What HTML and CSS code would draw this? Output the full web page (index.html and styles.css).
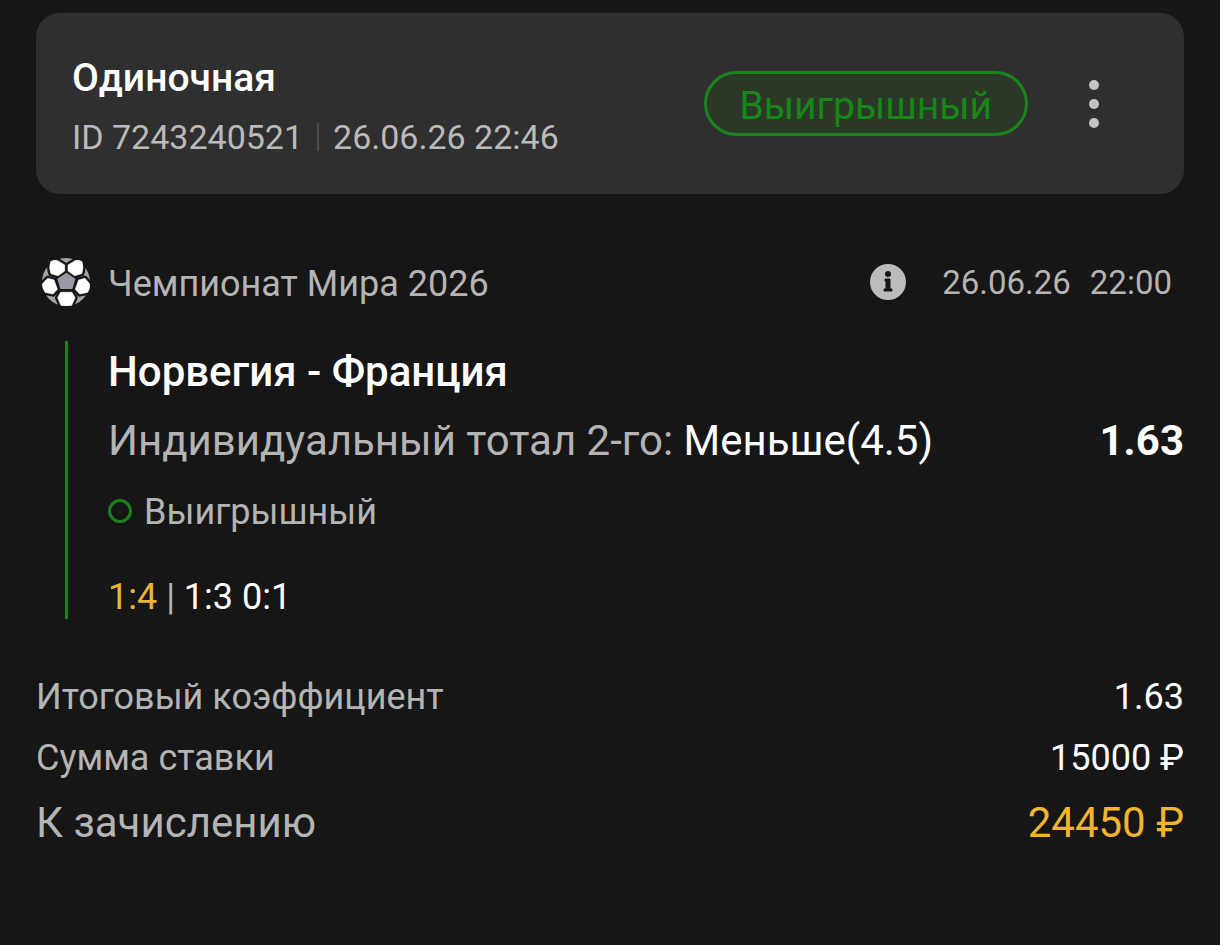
FILE: index.html
```html
<!DOCTYPE html>
<html lang="ru">
<head>
<meta charset="UTF-8">
<meta name="viewport" content="width=device-width, initial-scale=1.0">
<title>Одиночная ставка</title>
<link rel="stylesheet" href="styles.css">
</head>
<body>

<main class="coupon">
  <header class="card">
    <div class="card-info">
      <h1>Одиночная</h1>
      <p class="meta"><span>ID 7243240521</span><span class="divider"></span><time>26.06.26 22:46</time></p>
    </div>
    <span class="badge">Выигрышный</span>
    <button class="menu" type="button" aria-label="Меню">
      <svg width="10" height="48" viewBox="0 0 10 48" fill="#c4c4c4"><circle cx="5" cy="5" r="5"/><circle cx="5" cy="24" r="5"/><circle cx="5" cy="43" r="5"/></svg>
    </button>
  </header>

  <section class="event">
    <div class="league">
      <svg class="ball" viewBox="6 4 144 144">
        <defs>
          <g id="patches">
            <path d="M32 15Q42 9 53 12L74 25V43L54 57L33 51Q26 33 32 15Z"/>
            <path d="M126 15Q116 9 105 12L84 25V43L104 57L125 51Q132 33 126 15Z"/>
            <path d="M23 65L42 70L52 98L39 112L15 107Q7 94 7 82Z"/>
            <path d="M135 65L116 70L106 98L119 112L143 107Q151 94 149 82Z"/>
            <path d="M62 107H96L105 123L95 146Q79 150 63 146L53 123Z"/>
          </g>
        </defs>
        <circle cx="78" cy="76" r="72" fill="#a2a2a4"/>
        <path d="M74 40H84L115 66L104 104H54L43 66Z" fill="#161616"/>
        <use href="#patches" fill="#161616" stroke="#161616" stroke-width="16" stroke-linejoin="round"/>
        <use href="#patches" fill="#fff" stroke="#fff" stroke-width="2" stroke-linejoin="round"/>
        <path d="M79 48L106 66L97 97H61L52 66Z" fill="#9b99a5"/>
      </svg>
      <span class="league-name">Чемпионат Мира 2026</span>
      <button class="info" type="button" aria-label="Информация">
        <svg width="36" height="36" viewBox="0 0 36 36">
          <circle cx="18" cy="18" r="18" fill="#bcbcbc"/>
          <circle cx="18" cy="10" r="3" fill="#161616"/>
          <path d="M15 15H20V25H22V27H14V25H16V17H15Z" fill="#161616" stroke="#161616" stroke-linejoin="round"/>
        </svg>
      </button>
      <time class="start"><span>26.06.26</span><span>22:00</span></time>
    </div>

    <div class="bet">
      <h2>Норвегия - Франция</h2>
      <div class="market">
        <span>Индивидуальный тотал 2-го: <span class="pick">Меньше(4.5)</span></span>
        <strong class="odds">1.63</strong>
      </div>
      <p class="status"><span class="ring"></span>Выигрышный</p>
      <p class="score"><span class="total">1:4</span> <span class="bar">|</span> 1:3 0:1</p>
    </div>
  </section>

  <dl class="summary">
    <div class="row"><dt>Итоговый коэффициент</dt><dd>1.63</dd></div>
    <div class="row"><dt>Сумма ставки</dt><dd>15000 ₽</dd></div>
    <div class="row payout"><dt>К зачислению</dt><dd>24450 ₽</dd></div>
  </dl>
</main>

</body>
</html>
```
FILE: styles.css
```css
* { box-sizing: border-box; }
body { margin: 0; background: #161616; color: #b4b4b4; font-family: Roboto, sans-serif; font-size: 36px; }
h1, h2, p, dl, dd { margin: 0; }
button { padding: 0; border: none; background: none; cursor: pointer; }
svg { display: block; }
.coupon { padding: 13px 36px 36px; }

.card { display: flex; align-items: center; padding: 0 36px; background: #2f2f2f; border-radius: 24px; }
.card-info { flex: 1; padding: 35px 0 28px; }
h1 { color: #fff; font-size: 39px; font-weight: 500; line-height: 60px; }
.meta { display: flex; align-items: center; color: #bababa; font-size: 34px; line-height: 58px; }
.divider { width: 2px; height: 28px; margin: 0 14px; background: #4c4c4c; }
.badge { padding: 6px 33px 0; border: 3px solid #1a831a; border-radius: 33px; background: #2b3828; color: #168616; font-size: 39px; line-height: 53px; }
.menu { display: flex; justify-content: center; width: 60px; margin: 0 24px 0 36px; }

.league { display: flex; align-items: center; margin-top: 60px; padding: 0 12px 0 6px; line-height: 56px; }
.ball { width: 48px; height: 48px; }
.league-name { flex: 1; margin-left: 18px; padding-top: 4px; line-height: 52px; }
.info { margin-right: 36px; }
.start { display: flex; gap: 19px; padding-top: 2px; font-size: 33px; line-height: 54px; }

.bet { margin: 31px 0 0 29px; padding-left: 40px; border-left: 3px solid #1d801d; }
h2 { color: #fff; font-size: 42px; font-weight: 500; line-height: 62px; }
.market { display: flex; justify-content: space-between; margin-top: 8px; font-size: 42px; line-height: 60px; }
.pick { color: #fff; }
.odds { color: #fff; font-weight: 700; }
.status { display: flex; align-items: center; gap: 12px; margin-top: 19px; line-height: 44px; }
.ring { width: 24px; height: 24px; margin-bottom: 3px; border: 3px solid #1d801d; border-radius: 50%; }
.score { margin-top: 41px; color: #fff; line-height: 44px; }
.total { color: #ecb43c; }
.bar { color: #b4b4b4; }

.summary { margin-top: 48px; }
.row { display: flex; justify-content: space-between; line-height: 61px; }
.row dd { color: #fff; }
.payout { font-size: 42px; line-height: 68px; }
.payout dd { color: #f0b52e; }
```
